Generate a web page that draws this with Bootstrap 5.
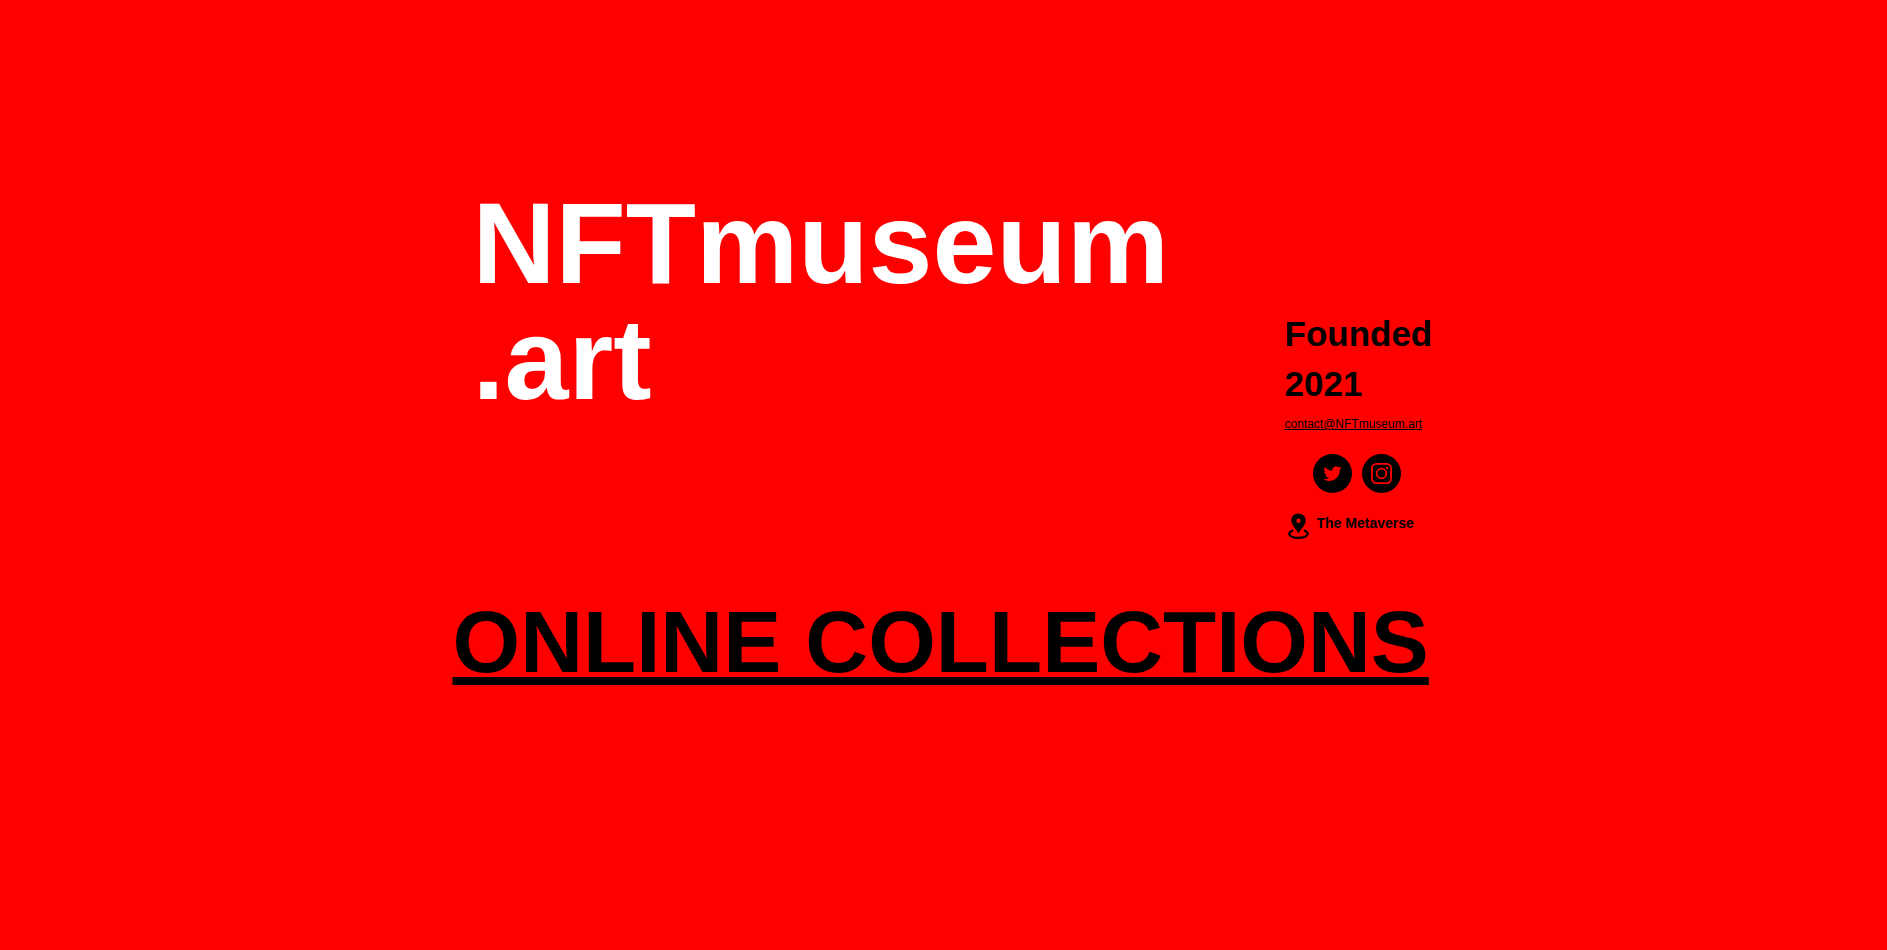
<!DOCTYPE html>
<html lang="en">
<head>
<meta charset="utf-8">
<meta name="viewport" content="width=device-width, initial-scale=1">
<title>NFTmuseum.art</title>
<link href="https://cdn.jsdelivr.net/npm/bootstrap@5.3.0/dist/css/bootstrap.min.css" rel="stylesheet">
<style>
  body { background: #f00; color: #000; font-family: "Liberation Sans", Arial, sans-serif; }
  a, a:hover { color: #000; }
  .museum-page { max-width: 982px; padding-top: 185px; }
  .site-title { font-size: 115px; line-height: 116px; padding-left: 20px; }
  .about { width: 150px; padding-top: 124px; }
  .founded { font-size: 35px; line-height: 50px; }
  .contact { font-size: 12px; line-height: 18px; margin-top: 6px; }
  .social { gap: 10px; margin: 21px 0 20px 28px; }
  .social svg { width: 39px; height: 39px; }
  .place { font-size: 14px; line-height: 20px; gap: 8px; padding-left: 3px; }
  .place svg { width: 21px; height: 26px; }
  .collections { font-size: 87px; line-height: 100px; margin-top: 53px; }
  .collections a { text-decoration-thickness: 8px; text-underline-offset: 5px; text-decoration-skip-ink: none; }
</style>
</head>
<body>
<main class="museum-page container-fluid px-0">
  <div class="d-flex flex-wrap justify-content-between">
    <h1 class="site-title fw-bold text-white mb-0">NFTmuseum<br>.art</h1>
    <section class="about">
      <h2 class="founded fw-bold mb-0">Founded<br>2021</h2>
      <p class="contact mb-0"><a href="mailto:contact@NFTmuseum.art">contact@NFTmuseum.art</a></p>
      <nav class="social d-flex" aria-label="Social media">
        <a class="d-flex" href="#twitter" aria-label="Twitter">
          <svg viewBox="0 0 39 39" aria-hidden="true"><circle cx="19.500" cy="19.500" r="19.500"/>
            <path transform="translate(10.500 10) scale(1.130)" fill="#f00" d="M5.026 15c6.038 0 9.341-5.003 9.341-9.334q.002-.211-.006-.422A6.700 6.700 0 0 0 16 3.542a6.700 6.700 0 0 1-1.889.518 3.300 3.300 0 0 0 1.447-1.817 6.500 6.500 0 0 1-2.087.793A3.286 3.286 0 0 0 7.875 6.030a9.320 9.320 0 0 1-6.767-3.429 3.290 3.290 0 0 0 1.018 4.382A3.300 3.300 0 0 1 .640 6.575v.045a3.290 3.290 0 0 0 2.632 3.218 3.200 3.200 0 0 1-.865.115 3 3 0 0 1-.614-.057 3.280 3.280 0 0 0 3.067 2.277A6.600 6.600 0 0 1 .780 13.580a6 6 0 0 1-.780-.045A9.340 9.340 0 0 0 5.026 15"/></svg>
        </a>
        <a class="d-flex" href="#instagram" aria-label="Instagram">
          <svg viewBox="0 0 39 39" aria-hidden="true"><circle cx="19.500" cy="19.500" r="19.500"/>
            <g fill="none" stroke="#f00" stroke-width="1.800"><rect x="9.900" y="9.900" width="19.200" height="19.200" rx="4.500"/><circle cx="19.500" cy="19.500" r="4.800"/></g>
            <circle cx="25" cy="14" r="1.200" fill="#f00"/></svg>
        </a>
      </nav>
      <div class="place d-flex fw-bold">
        <svg viewBox="0 0 21 26" aria-hidden="true">
          <path fill-rule="evenodd" d="M10.500 0.500C6.300 0.500 3.300 3.500 3.300 7.500c0 4.500 4.700 8.300 7.200 13 2.500-4.700 7.200-8.500 7.200-13 0-4-3-7-7.200-7Zm0 5a2.200 2.200 0 1 1 0 4.400 2.200 2.200 0 0 1 0-4.400Z"/>
          <path fill="none" stroke="#000" stroke-width="2.200" stroke-linecap="round" d="M4.300 17.700C2.300 18.500 1.300 19.500 1.300 20.800c0 2.300 3.800 4 9.200 4s9.200-1.700 9.200-4c0-1.300-1-2.300-3-3.100"/></svg>
        <span class="text-nowrap">The Metaverse</span>
      </div>
    </section>
  </div>
  <h2 class="collections fw-bold mb-0"><a href="#collections">ONLINE COLLECTIONS</a></h2>
</main>
<script src="https://cdn.jsdelivr.net/npm/bootstrap@5.3.0/dist/js/bootstrap.bundle.min.js"></script>
</body>
</html>
